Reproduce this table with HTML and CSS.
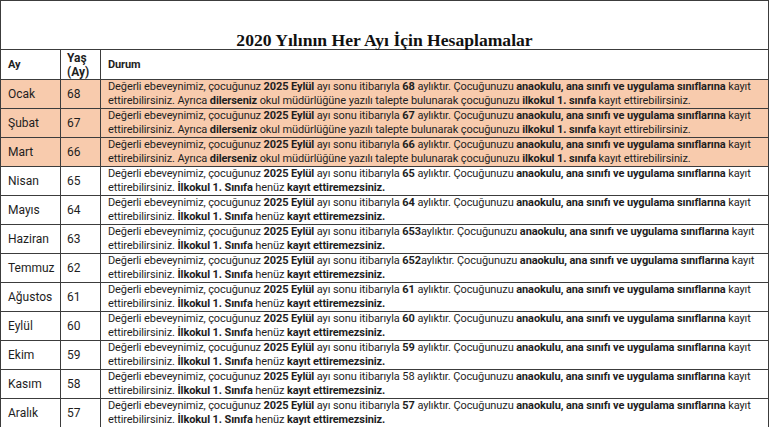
FILE: index.html
```html
<!DOCTYPE html>
<html lang="tr">
<head>
<meta charset="utf-8">
<title>2020 Yılının Her Ayı İçin Hesaplamalar</title>
<link rel="stylesheet" href="styles.css">
</head>
<body>
<table class="grid">
  <colgroup>
    <col class="c-ay">
    <col class="c-yas">
    <col class="c-durum">
  </colgroup>
  <thead>
    <tr class="title-row"><th colspan="3" class="title">2020 Yılının Her Ayı İçin Hesaplamalar</th></tr>
    <tr class="head-row"><th class="cell-ay">Ay</th><th class="cell-yas">Yaş<br>(Ay)</th><th class="txt">Durum</th></tr>
  </thead>
  <tbody>
    <tr class="hl"><td class="cell-ay">Ocak</td><td class="cell-yas">68</td><td class="txt">Değerli ebeveynimiz, çocuğunuz <b>2025 Eylül</b> ayı sonu itibarıyla <b>68</b> aylıktır. Çocuğunuzu <b>anaokulu, ana sınıfı ve uygulama sınıflarına</b> kayıt<br>ettirebilirsiniz. Ayrıca <b>dilerseniz</b> okul müdürlüğüne yazılı talepte bulunarak çocuğunuzu <b>ilkokul 1. sınıfa</b> kayıt ettirebilirsiniz.</td></tr>
    <tr class="hl"><td class="cell-ay">Şubat</td><td class="cell-yas">67</td><td class="txt">Değerli ebeveynimiz, çocuğunuz <b>2025 Eylül</b> ayı sonu itibarıyla <b>67</b> aylıktır. Çocuğunuzu <b>anaokulu, ana sınıfı ve uygulama sınıflarına</b> kayıt<br>ettirebilirsiniz. Ayrıca <b>dilerseniz</b> okul müdürlüğüne yazılı talepte bulunarak çocuğunuzu <b>ilkokul 1. sınıfa</b> kayıt ettirebilirsiniz.</td></tr>
    <tr class="hl"><td class="cell-ay">Mart</td><td class="cell-yas">66</td><td class="txt">Değerli ebeveynimiz, çocuğunuz <b>2025 Eylül</b> ayı sonu itibarıyla <b>66</b> aylıktır. Çocuğunuzu <b>anaokulu, ana sınıfı ve uygulama sınıflarına</b> kayıt<br>ettirebilirsiniz. Ayrıca <b>dilerseniz</b> okul müdürlüğüne yazılı talepte bulunarak çocuğunuzu <b>ilkokul 1. sınıfa</b> kayıt ettirebilirsiniz.</td></tr>
    <tr><td class="cell-ay">Nisan</td><td class="cell-yas">65</td><td class="txt">Değerli ebeveynimiz, çocuğunuz <b>2025 Eylül</b> ayı sonu itibarıyla <b>65</b> aylıktır. Çocuğunuzu <b>anaokulu, ana sınıfı ve uygulama sınıflarına</b> kayıt<br>ettirebilirsiniz. <b>İlkokul 1. Sınıfa</b> henüz <b>kayıt ettiremezsiniz.</b></td></tr>
    <tr><td class="cell-ay">Mayıs</td><td class="cell-yas">64</td><td class="txt">Değerli ebeveynimiz, çocuğunuz <b>2025 Eylül</b> ayı sonu itibarıyla <b>64</b> aylıktır. Çocuğunuzu <b>anaokulu, ana sınıfı ve uygulama sınıflarına</b> kayıt<br>ettirebilirsiniz. <b>İlkokul 1. Sınıfa</b> henüz <b>kayıt ettiremezsiniz.</b></td></tr>
    <tr><td class="cell-ay">Haziran</td><td class="cell-yas">63</td><td class="txt">Değerli ebeveynimiz, çocuğunuz <b>2025 Eylül</b> ayı sonu itibarıyla <b>653</b>aylıktır. Çocuğunuzu <b>anaokulu, ana sınıfı ve uygulama sınıflarına</b> kayıt<br>ettirebilirsiniz. <b>İlkokul 1. Sınıfa</b> henüz <b>kayıt ettiremezsiniz.</b></td></tr>
    <tr><td class="cell-ay">Temmuz</td><td class="cell-yas">62</td><td class="txt">Değerli ebeveynimiz, çocuğunuz <b>2025 Eylül</b> ayı sonu itibarıyla <b>652</b>aylıktır. Çocuğunuzu <b>anaokulu, ana sınıfı ve uygulama sınıflarına</b> kayıt<br>ettirebilirsiniz. <b>İlkokul 1. Sınıfa</b> henüz <b>kayıt ettiremezsiniz.</b></td></tr>
    <tr><td class="cell-ay">Ağustos</td><td class="cell-yas">61</td><td class="txt">Değerli ebeveynimiz, çocuğunuz <b>2025 Eylül</b> ayı sonu itibarıyla <b>61</b> aylıktır. Çocuğunuzu <b>anaokulu, ana sınıfı ve uygulama sınıflarına</b> kayıt<br>ettirebilirsiniz. <b>İlkokul 1. Sınıfa</b> henüz <b>kayıt ettiremezsiniz.</b></td></tr>
    <tr><td class="cell-ay">Eylül</td><td class="cell-yas">60</td><td class="txt">Değerli ebeveynimiz, çocuğunuz <b>2025 Eylül</b> ayı sonu itibarıyla <b>60</b> aylıktır. Çocuğunuzu <b>anaokulu, ana sınıfı ve uygulama sınıflarına</b> kayıt<br>ettirebilirsiniz. <b>İlkokul 1. Sınıfa</b> henüz <b>kayıt ettiremezsiniz.</b></td></tr>
    <tr><td class="cell-ay">Ekim</td><td class="cell-yas">59</td><td class="txt">Değerli ebeveynimiz, çocuğunuz <b>2025 Eylül</b> ayı sonu itibarıyla <b>59</b> aylıktır. Çocuğunuzu <b>anaokulu, ana sınıfı ve uygulama sınıflarına</b> kayıt<br>ettirebilirsiniz. <b>İlkokul 1. Sınıfa</b> henüz <b>kayıt ettiremezsiniz.</b></td></tr>
    <tr><td class="cell-ay">Kasım</td><td class="cell-yas">58</td><td class="txt">Değerli ebeveynimiz, çocuğunuz <b>2025 Eylül</b> ayı sonu itibarıyla 58 aylıktır. Çocuğunuzu <b>anaokulu, ana sınıfı ve uygulama sınıflarına</b> kayıt<br>ettirebilirsiniz. <b>İlkokul 1. Sınıfa</b> henüz <b>kayıt ettiremezsiniz.</b></td></tr>
    <tr><td class="cell-ay">Aralık</td><td class="cell-yas">57</td><td class="txt">Değerli ebeveynimiz, çocuğunuz <b>2025 Eylül</b> ayı sonu itibarıyla <b>57</b> aylıktır. Çocuğunuzu <b>anaokulu, ana sınıfı ve uygulama sınıflarına</b> kayıt<br>ettirebilirsiniz. <b>İlkokul 1. Sınıfa</b> henüz <b>kayıt ettiremezsiniz.</b></td></tr>
  </tbody>
</table>
</body>
</html>
```
FILE: styles.css
```css
html, body {
  margin: 0;
  padding: 0;
  background: #ffffff;
}
.grid {
  border-collapse: collapse;
  table-layout: fixed;
  width: 769px;
  font-family: Roboto, "Liberation Sans", sans-serif;
  font-size: 11px;
  line-height: 14px;
  color: #1e1e1e;
}
.c-ay { width: 60px; }
.c-yas { width: 40px; }
.grid th,
.grid td {
  border: 1px solid #3c3c3c;
  padding: 0 0 0 7px;
  text-align: left;
  vertical-align: middle;
  white-space: nowrap;
}
.grid b { font-weight: 700; }
.cell-ay {
  font-size: 12px;
  padding-left: 7px;
}
.grid .cell-yas {
  font-size: 12px;
  padding-left: 6px;
}
.txt {
  letter-spacing: -0.1px;
}
.title-row .title {
  height: 48px;
  padding: 0;
  text-align: center;
  vertical-align: bottom;
  font-family: "Liberation Serif", serif;
  font-weight: bold;
  font-size: 17.6px;
  line-height: 18px;
  letter-spacing: 0;
  color: #111111;
}
.head-row th {
  font-weight: 700;
  padding-top: 1px;
  font-size: 11px;
}
.hl td { background: #f8cbad; }
```
